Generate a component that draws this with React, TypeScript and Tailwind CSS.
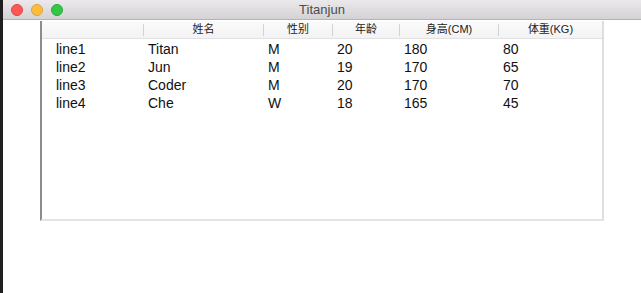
const columns = [
  { title: "", width: "w-[101px]" },
  { title: "姓名", width: "w-[120px]" },
  { title: "性别", width: "w-[69px]" },
  { title: "年龄", width: "w-[67px]" },
  { title: "身高(CM)", width: "w-[99px]" },
  { title: "体重(KG)", width: "w-[104px]" },
];

const rows = [
  ["line1", "Titan", "M", "20", "180", "80"],
  ["line2", "Jun", "M", "19", "170", "65"],
  ["line3", "Coder", "M", "20", "170", "70"],
  ["line4", "Che", "W", "18", "165", "45"],
];

function TrafficLights() {
  return (
    <div className="flex items-center gap-[8px] pl-[8px]">
      <span className="w-[12px] h-[12px] rounded-full bg-[#fc5753] border border-[#e0443e]" />
      <span className="w-[12px] h-[12px] rounded-full bg-[#fdbc40] border border-[#dea236]" />
      <span className="w-[12px] h-[12px] rounded-full bg-[#33c748] border border-[#27aa35]" />
    </div>
  );
}

export default function App() {
  return (
    <div className="w-[641px] h-[293px] flex bg-white overflow-hidden font-['Liberation_Sans','Noto_Sans_CJK_SC',sans-serif]">
      <div className="w-[3px] bg-[#1f1f1f]" />
      <div className="flex-1 flex flex-col">
        {/* title bar */}
        <div className="relative h-[20px] flex items-center bg-gradient-to-b from-[#ebe9eb] to-[#d4d2d4] border-b border-[#b4b4b4]">
          <TrafficLights />
          <div className="absolute inset-0 flex items-center justify-center text-[13px] text-[#4c4c4c]">
            Titanjun
          </div>
        </div>

        {/* table */}
        <div className="pl-[37px] pt-[1px]">
          <div className="w-[564px] h-[200px] border-l-2 border-l-[#8c8c8c] border-r-2 border-r-[#dedede] border-b-2 border-b-[#e4e4e4] bg-white">
            <div className="flex h-[18px] bg-gradient-to-b from-[#fbfbfb] to-[#f3f3f3] border-b border-[#e2e2e2]">
              {columns.map((c, i) => (
                <div key={i} className={`${c.width} flex items-center`}>
                  {i > 0 && <div className="w-px h-[12px] bg-[#d2d2d2]" />}
                  <div className="flex-1 text-center text-[11px] leading-none text-[#222]">
                    {c.title}
                  </div>
                </div>
              ))}
            </div>
            <div className="pt-[1px]">
              {rows.map((r, ri) => (
                <div key={ri} className="flex h-[18px] items-center text-[14px] text-[#111]">
                  {r.map((cell, ci) => (
                    <div
                      key={ci}
                      className={`${columns[ci].width} ${ci === 0 ? "pl-[14px]" : "pl-[5px]"} leading-none`}
                    >
                      {cell}
                    </div>
                  ))}
                </div>
              ))}
            </div>
          </div>
        </div>
      </div>
    </div>
  );
}
